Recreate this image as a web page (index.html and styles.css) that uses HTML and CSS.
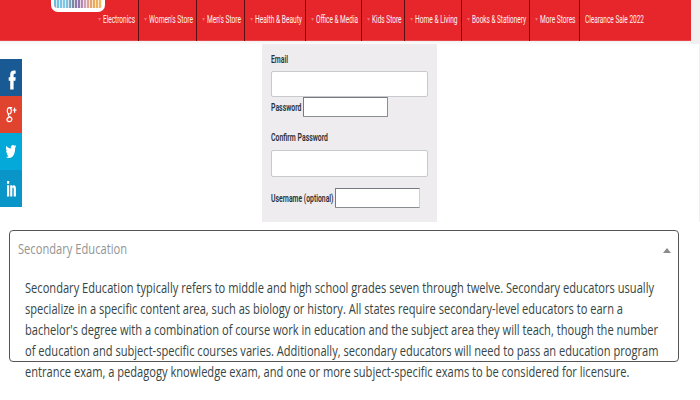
FILE: index.html
```html
<!DOCTYPE html>
<html lang="en">
<head>
<meta charset="utf-8">
<title>Register</title>
<link rel="stylesheet" href="styles.css">
</head>
<body>
<header class="top">
  <div class="bar">
    <div class="logo"></div>
    <nav class="nav">
      <a class="n1"><i></i><span data-w="32">Electronics</span></a>
      <a class="n2"><i></i><span data-w="44">Women's Store</span></a>
      <a class="n3"><i></i><span data-w="34">Men's Store</span></a>
      <a class="n4"><i></i><span data-w="47">Health &amp; Beauty</span></a>
      <a class="n5"><i></i><span data-w="42">Office &amp; Media</span></a>
      <a class="n6"><i></i><span data-w="29.5">Kids Store</span></a>
      <a class="n7"><i></i><span data-w="42.5">Home &amp; Living</span></a>
      <a class="n8"><i></i><span data-w="54">Books &amp; Stationery</span></a>
      <a class="n9"><i></i><span data-w="35.5">More Stores</span></a>
      <a class="n10"><span data-w="59">Clearance Sale 2022</span></a>
    </nav>
  </div>
</header>
<main class="main">
  <aside class="social">
    <a class="fb"><svg viewBox="0 0 22 37"><path d="M10.2 30.500V21.800H8.700v-3.500h1.500v-2.600c0-3.300 1.600-4.600 5.400-4.200v3.300c-1.500-.1-2 .2-2 1.400v2.100h2.100l-.3 3.500h-1.800v8.700z"/></svg></a>
    <a class="gp"><svg viewBox="0 0 22 37"><g class="line"><ellipse cx="9.300" cy="14.800" rx="2" ry="3.200"/><path d="M12.200 11.600H9.200M9 18c-1.700 1.200-.3 2 1 2.700 3.300 1.900 1.800 4.900-.8 4.900-3 0-3.200-3.800.5-4.400M12.700 14.200h3.800M14.600 11.700v5"/></g></svg></a>
    <a class="tw"><svg viewBox="0 0 22 37"><path d="M6.400 12.800c1.200 1.700 2.700 2.600 4.500 2.700-.3-2.300.7-3.600 2-3.600.7 0 1.200.3 1.600.8l1.400-.6-.7 1.500 1.100-.3-1.200 1.600c.2 6-2.500 10-5.800 10-1.200 0-2.300-.3-3.300-1 1.100 0 2-.3 2.700-1-1-.1-1.500-1.200-1.800-2.200h.8c-1.100-.4-1.600-1.600-1.600-2.900l.8.2c-.9-1.100-1.200-3.400-.5-5.200z"/></svg></a>
    <a class="li"><svg viewBox="0 0 22 37"><path d="M7 15.300h2.200v11.200H7zM7 11h2.200v2.700H7zM10.200 15.300h2v1.300c1.100-2.200 3.700-1.800 3.700 1.700v8.200h-2.200v-7.400c0-2.300-1.400-2.100-1.400-.2v7.600h-2.100z"/></svg></a>
  </aside>
  <form class="form">
    <label class="l1"><span data-w="17">Email</span></label>
    <input class="wide w1">
    <div class="row r1"><label><span data-w="30.500">Password</span></label><input class="small"></div>
    <label class="l2"><span data-w="57">Confirm Password</span></label>
    <input class="wide w2">
    <div class="row r2"><label><span data-w="62.500">Username (optional)</span></label><input class="small"></div>
  </form>
</main>
<section class="panel">
  <div class="head"><span class="title" data-w="109">Secondary Education</span><b class="up"></b></div>
  <p class="copy">
    <span data-w="629">Secondary Education typically refers to middle and high school grades seven through twelve. Secondary educators usually</span>
    <span data-w="598">specialize in a specific content area, such as biology or history. All states require secondary-level educators to earn a</span>
    <span data-w="633">bachelor's degree with a combination of course work in education and the subject area they will teach, though the number</span>
    <span data-w="633.500">of education and subject-specific courses varies. Additionally, secondary educators will need to pass an education program</span>
    <span data-w="604.500">entrance exam, a pedagogy knowledge exam, and one or more subject-specific exams to be considered for licensure.</span>
  </p>
</section>
<script src="fit.js"></script>
</body>
</html>
```
FILE: styles.css
```css
* { box-sizing: border-box; }
body { margin: 0; width: 700px; height: 400px; overflow: hidden; background: #fff; font-family: Roboto, "Liberation Sans", sans-serif; }
[data-w] { display: inline-block; white-space: nowrap; transform-origin: 0 50%; }
.top { height: 44px; background: linear-gradient(90deg, transparent 691px, #f0f0f0 691px), linear-gradient(#fff 41px, #f1eeee 41px, #fff 44px); }
.bar { width: 691px; height: 41px; background: #e6262b; display: flex; border-bottom: 1px solid #e5474b; }
.logo { width: 54px; height: 12px; margin-left: 51px; border: 3px solid #fff; border-top: 0; border-bottom-width: 4px; border-radius: 0 0 7px 7px;
  background: repeating-linear-gradient(90deg, transparent 0 2px, rgba(255,255,255,.7) 2px 3px), linear-gradient(90deg, #69bddd, #86c8e8 25%, #77869e 40%, #9b71b1 53%, #d8a4b7 65%, #e9a45e 80%, #f3c05c); background-clip: padding-box; }
.nav { display: flex; margin-left: -12px; }
.nav a { display: flex; align-items: center; height: 41px; flex: none; color: #fff3f1; font-size: 10px; line-height: 12px; border-right: 1px solid #5c1012; padding-bottom: 2px; }
.nav i { width: 3px; height: 3px; margin: 0 2px 0 5px; flex: none; background: #f06a6d; clip-path: polygon(0 0, 100% 0, 50% 100%); }
.nav span { width: 0; }
.n1 { width: 46px; }
.n2 { width: 58px; }
.n3 { width: 48px; }
.n4 { width: 61px; }
.n5 { width: 56px; }
.n6 { width: 43px; }
.n7 { width: 57px; }
.n8 { width: 68px; }
.n9 { width: 50px; }
.nav .n10 { width: 70px; border: 0; padding-left: 5px; }
.main { display: flex; height: 186px; background: linear-gradient(#f0f0f0, #f0f0f0) right top / 1px 178px no-repeat; }
.social { width: 22px; padding-top: 15px; flex: none; }
.social a { display: block; height: 37px; }
.social svg { display: block; width: 22px; height: 37px; fill: #fff; }
.social .line { fill: none; stroke: #fff; stroke-width: 1.2; }
.fb { background: #195a94; }
.gp { background: #e0432e; }
.tw { background: #04a9da; }
.li { background: #0995c8; }
.form { width: 175px; height: 178px; margin-left: 240px; padding: 9px 9px 0; background: #eeecee; }
.form label { display: block; height: 13px; font-size: 10px; line-height: 13px; font-weight: 600; color: #2b3235; }
.form input { display: block; background: #fff; border: 1px solid #c8c9cc; border-radius: 2px; padding: 0; outline: 0; }
.form .wide { width: 157px; }
.w1 { height: 26px; margin-top: 5px; }
.form .l2 { margin-top: 14px; }
.w2 { height: 27px; margin-top: 6px; }
.row { display: flex; align-items: center; height: 20px; }
.row label { width: 32px; flex: none; }
.r2 { margin-top: 11px; }
.r2 label { width: 64px; }
.form .small { width: 85px; height: 20px; border-color: #777b80 #8b8e91 #8b8e91 #777b80; border-radius: 1px; }
.r2 .small { border-right-color: #d0d0d2; }
.panel { width: 670px; height: 132px; margin-left: 9px; border: 1px solid #555; border-radius: 4px; font-family: "Open Sans", "Noto Sans", sans-serif; font-size: 14px; line-height: 21px; }
.head { display: flex; justify-content: space-between; align-items: center; height: 21px; margin-top: 7px; padding: 0 7px 0 8px; color: #929595; }
.up { border: 4px solid transparent; border-top: 0; border-bottom: 5px solid #8b8b8b; margin-top: 3px; }
.copy { margin: 18px 0 0 15px; color: #354543; }
.copy span { display: block; width: max-content; }
```
FILE: fit.js
```js
// Condense each label to the width given in its data-w attribute.
document.querySelectorAll('[data-w]').forEach(function (el) {
  var range = document.createRange();
  range.selectNodeContents(el);
  var natural = range.getBoundingClientRect().width;
  el.style.transform = 'scaleX(' + (parseFloat(el.dataset.w) / natural) + ')';
});
```
